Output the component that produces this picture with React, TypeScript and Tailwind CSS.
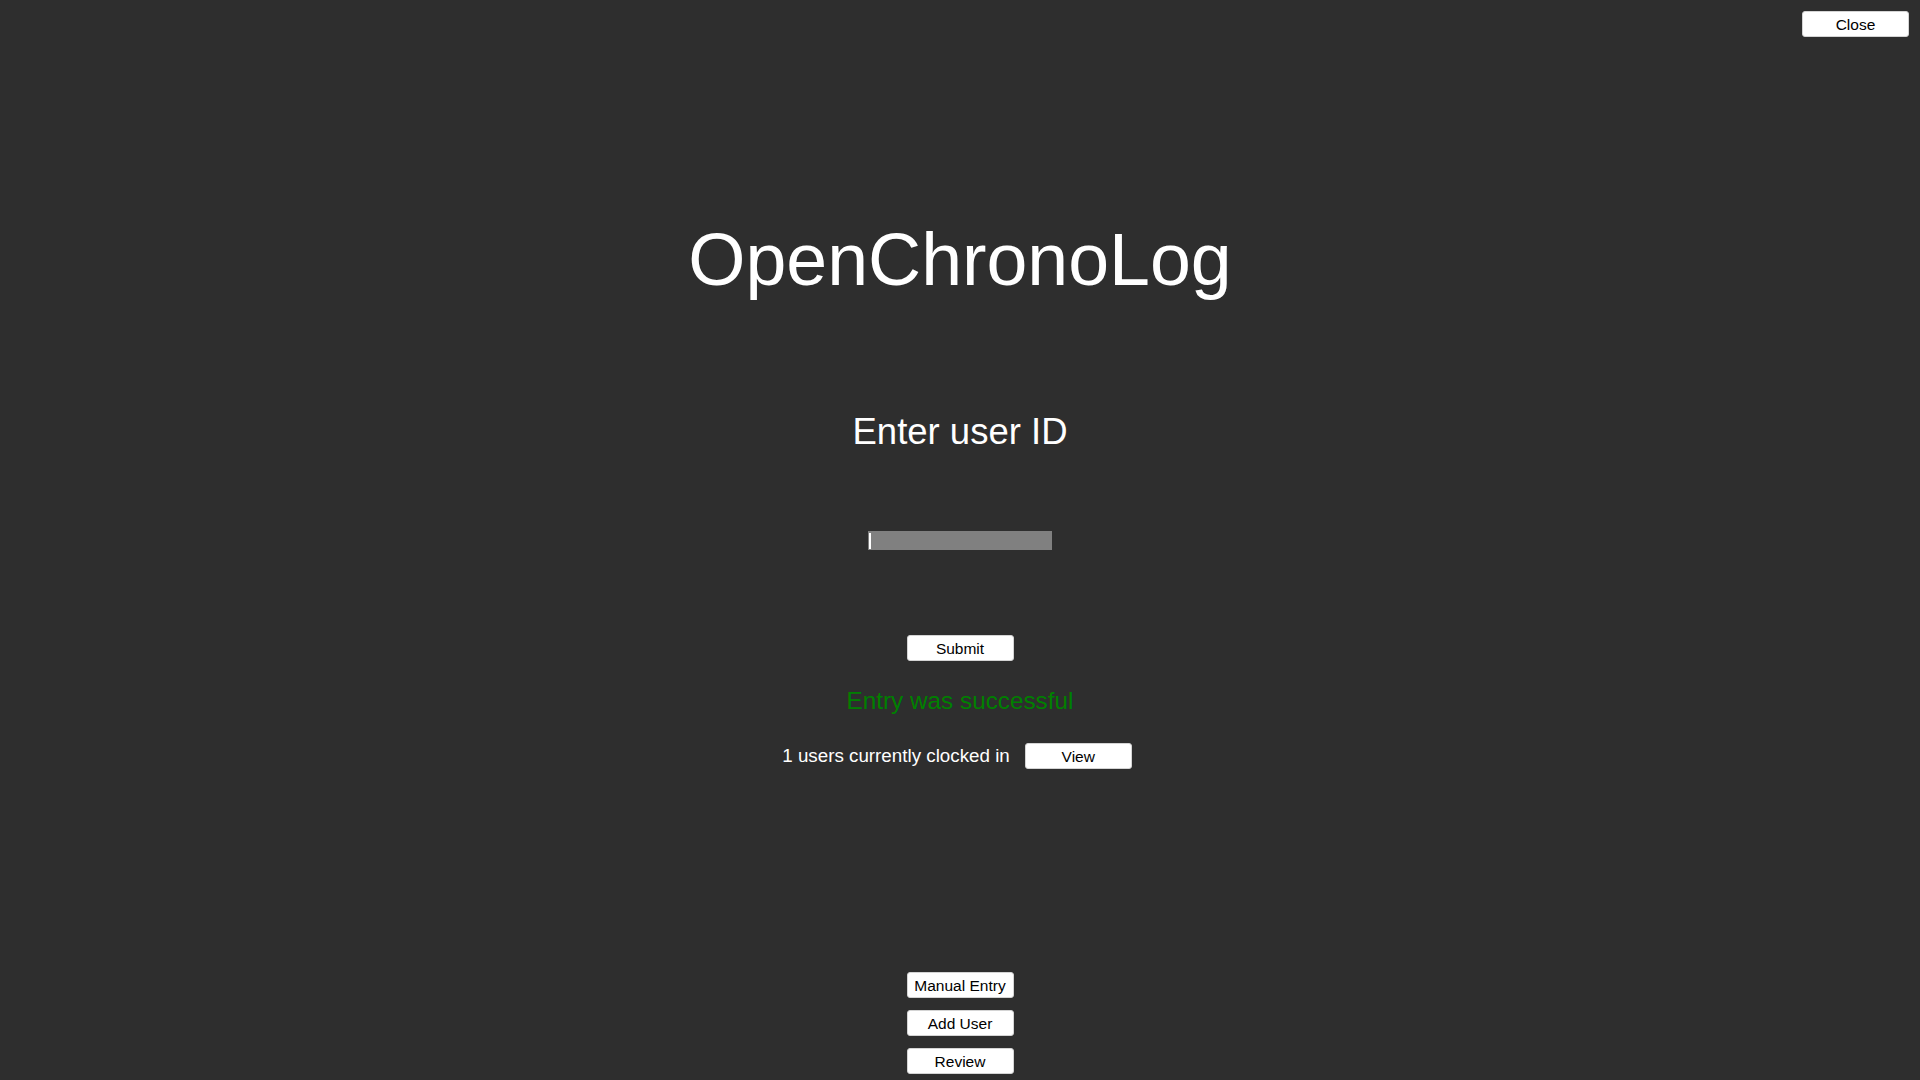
function Btn({ children }: { children: string }) {
  return (
    <button className="w-[107px] h-[26px] pt-[2px] bg-white rounded-[3px] border border-[#d4d4d4] text-black text-[15.5px] leading-none flex items-center justify-center">
      {children}
    </button>
  );
}

export default function App() {
  return (
    <div className="w-full h-[1080px] overflow-hidden bg-[#2e2e2e] font-['Liberation_Sans',Arial,sans-serif]">
      <div className="flex justify-end pt-[11px] pr-[11px]">
        <Btn>Close</Btn>
      </div>

      <div className="flex flex-col items-center">
        <h1 className="mt-[183px] text-[73.5px] leading-[80px] text-white">OpenChronoLog</h1>

        <h2 className="mt-[112px] text-[36.5px] leading-[40px] text-white">Enter user ID</h2>

        <div className="mt-[79px] w-[184px] h-[19px] bg-[#808080] flex items-center pl-[1px]">
          <span className="w-[2px] h-[16px] bg-white" />
          <input className="flex-1 min-w-0 h-full bg-transparent outline-none text-white text-[14px]" />
        </div>

        <div className="mt-[85px]">
          <Btn>Submit</Btn>
        </div>

        <p className="mt-[26px] text-[24.3px] leading-[28px] text-[#008000]">Entry was successful</p>

        <div className="mt-[28px] flex items-center gap-[15px] pr-[6px]">
          <span className="text-white text-[18.8px] leading-none pt-[1px]">1 users currently clocked in</span>
          <Btn>View</Btn>
        </div>

        <div className="mt-[203px] flex flex-col gap-[12px]">
          <Btn>Manual Entry</Btn>
          <Btn>Add User</Btn>
          <Btn>Review</Btn>
        </div>
      </div>
    </div>
  );
}
